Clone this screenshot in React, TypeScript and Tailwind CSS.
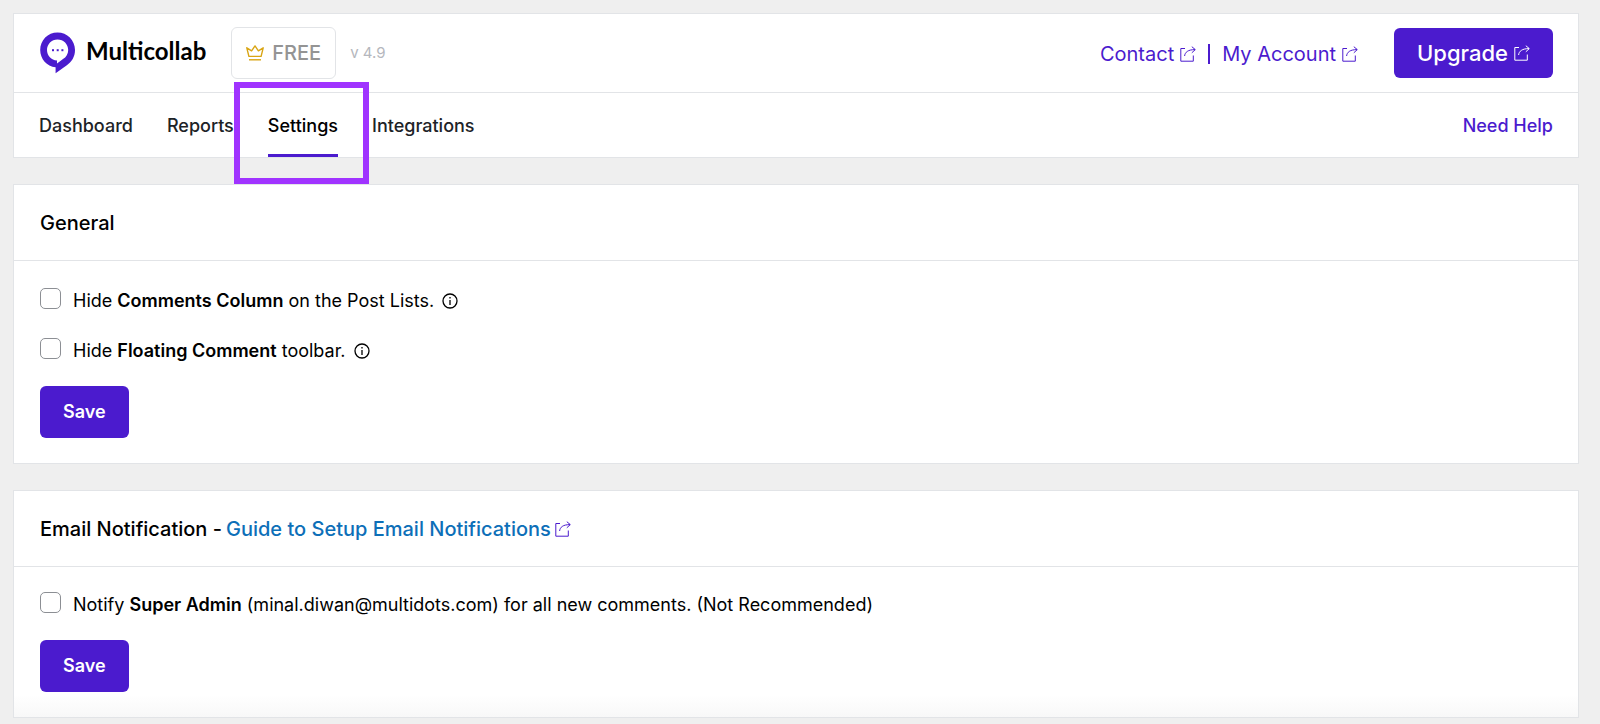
import { useState } from 'react';
import type { ReactNode } from 'react';

const tabs = ['Dashboard', 'Reports', 'Settings', 'Integrations'];

function Logo() {
  return (
    <svg className="w-9 h-[42px]" viewBox="0 0 36 42" aria-hidden="true">
      <path
        fill="#4b1bce"
        d="M17.5 0.5C27.2 0.5 35 8.2 35 18C35 24.5 31.8 30 26.5 33.5L15.6 41.2V35.3C6.8 34.3 0.2 27 0.2 18C0.2 8.2 7.8 0.5 17.5 0.5Z"
      />
      <path
        fill="#fff"
        d="M17.5 7.5C23.6 7.5 28.2 12.2 28.2 18C28.2 22 26.2 25.3 23 27L17 31.6V28.4C11.3 28.2 7 23.8 7 18C7 12.2 11.6 7.5 17.5 7.5Z"
      />
      <rect x="12" y="17.2" width="2" height="2" fill="#4b1bce" />
      <rect x="16.7" y="17.2" width="2" height="2" fill="#4b1bce" />
      <rect x="21.4" y="17.2" width="2" height="2" fill="#4b1bce" />
    </svg>
  );
}

function CrownIcon() {
  return (
    <svg className="w-[18px] h-4" viewBox="0 0 18 16" fill="none" stroke="#d9a514" strokeWidth="1.4" strokeLinejoin="round" aria-hidden="true">
      <path d="M2.9 11.4L0.8 2.8L5.6 5.8L9 0.9L12.4 5.8L17.2 2.8L15.1 11.4Z" />
      <path d="M3 14.8H15" />
    </svg>
  );
}

function ExternalIcon() {
  return (
    <svg className="w-4 h-4 shrink-0" viewBox="0 0 16 16" fill="none" stroke="currentColor" strokeWidth="1" aria-hidden="true">
      <path d="M5 2.5H0.8V15.2H13.3V9.5" />
      <path d="M4.6 10C5 6.2 8 3.6 15 3.6" />
      <path d="M11.8 0.7L15.3 3.6L11.8 6.8" />
    </svg>
  );
}

function InfoIcon() {
  return (
    <svg className="w-4 h-4 shrink-0" viewBox="0 0 16 16" fill="none" stroke="currentColor" strokeWidth="1.3" aria-hidden="true">
      <circle cx="8" cy="8" r="7" />
      <path d="M8 7V12" />
      <path d="M8 4V5.5" />
    </svg>
  );
}

function Option({ id, info, children }: { id: string; info?: boolean; children: ReactNode }) {
  const [checked, setChecked] = useState(false);

  return (
    <div className="flex items-center">
      <input
        id={id}
        type="checkbox"
        checked={checked}
        onChange={() => setChecked(!checked)}
        className="appearance-none w-[21px] h-[21px] mb-1 rounded-[5px] border border-[#8c8f94] bg-white checked:bg-[#4b1bce]"
      />
      <label htmlFor={id} className="ml-3 text-lg leading-6">{children}</label>
      {info && <span className="ml-2"><InfoIcon /></span>}
    </div>
  );
}

function Panel({ title, children }: { title: ReactNode; children: ReactNode }) {
  return (
    <section className="bg-white border border-[#e2e4e7]">
      <h2 className="flex items-center h-[76px] px-[26px] border-b border-[#e2e4e7] text-xl font-medium">{title}</h2>
      {children}
    </section>
  );
}

function SaveButton() {
  return (
    <button type="button" className="h-[52px] px-[23px] rounded-md bg-[#4b1bce] text-white text-lg font-semibold">
      Save
    </button>
  );
}

export default function App() {
  const [active, setActive] = useState('Settings');

  return (
    <div className="min-h-screen bg-[#efefef] pt-[13px] pl-[13px] pr-[21px] pb-1.5 font-['Inter',sans-serif] text-black">
      <header className="bg-white border border-[#e2e4e7]">
        <div className="flex items-center justify-between h-[79px] pl-[26px] pr-[25px] border-b border-[#e2e4e7]">
          <div className="flex items-center">
            <Logo />
            <span className="ml-2.5 mb-1 font-['Lato',sans-serif] text-2xl font-bold">Multicollab</span>
            <span className="ml-[25px] flex items-center gap-2 h-[52px] px-3.5 border border-[#e2e4e7] rounded-md text-xl font-medium text-[#949494]">
              <CrownIcon />
              FREE
            </span>
            <span className="ml-3.5 text-[15px] text-[#b5b7bd]">v 4.9</span>
          </div>
          <div className="flex items-center text-xl text-[#4b1bce]">
            <a href="#contact" className="flex items-center gap-1.5 pt-0.5">Contact <ExternalIcon /></a>
            <span className="mx-3 mt-0.5 w-0.5 h-5 bg-[#4b1bce]" />
            <a href="#account" className="flex items-center gap-1.5 pt-0.5">My Account <ExternalIcon /></a>
            <a href="#upgrade" className="ml-9 flex items-center gap-1.5 h-[50px] px-[23px] rounded-md bg-[#4b1bce] text-white text-[22px] font-medium">
              Upgrade <ExternalIcon />
            </a>
          </div>
        </div>
        <div className="flex items-center justify-between h-16 px-[25px]">
          <nav className="flex gap-[34px] h-full">
            {tabs.map((tab) => (
              <a
                key={tab}
                href={`#${tab.toLowerCase()}`}
                onClick={() => setActive(tab)}
                className={`relative flex items-center h-full pt-1 text-lg font-medium border-b-3 ${
                  active === tab ? 'border-b-[#4b1bce] text-black' : 'border-b-transparent text-[#1d2327]'
                }`}
              >
                {tab}
                {tab === 'Settings' && (
                  <span className="absolute -left-[34px] -right-[31px] -top-[11px] -bottom-[30px] border-6 border-[#a033ff] pointer-events-none" />
                )}
              </a>
            ))}
          </nav>
          <a href="#help" className="pt-0.5 text-lg font-medium text-[#4b1bce]">Need Help</a>
        </div>
      </header>

      <main className="mt-[26px] flex flex-col gap-[26px]">
        <Panel title="General">
          <form className="flex flex-col items-start px-[26px] pt-[27px] pb-[25px]">
            <div className="flex flex-col gap-[25px] mb-[23px]">
              <Option id="hide-column" info>
                Hide <b className="font-semibold">Comments Column</b> on the Post Lists.
              </Option>
              <Option id="hide-toolbar" info>
                Hide <b className="font-semibold">Floating Comment</b> toolbar.
              </Option>
            </div>
            <SaveButton />
          </form>
        </Panel>

        <Panel
          title={
            <>
              Email Notification -
              <a href="#guide" className="ml-1 flex items-center gap-1 text-[#0d6fb8]">
                Guide to Setup Email Notifications
                <span className="text-[#4b1bce]"><ExternalIcon /></span>
              </a>
            </>
          }
        >
          <form className="flex flex-col items-start gap-[23px] px-[26px] pt-[25px] pb-[25px] bg-linear-to-t from-[#f8f8f8] to-white to-15%">
            <Option id="notify-admin">
              Notify <b className="font-semibold">Super Admin</b> (minal.diwan@multidots.com) for all new comments. (Not Recommended)
            </Option>
            <SaveButton />
          </form>
        </Panel>
      </main>
    </div>
  );
}
